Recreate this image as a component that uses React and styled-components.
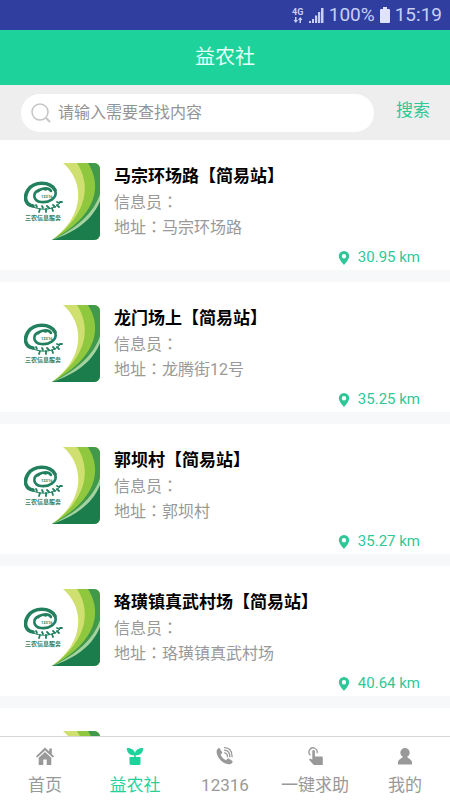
import React, { useState } from 'react';
import styled, { createGlobalStyle } from 'styled-components';

const stations = [
  { id: 1, name: '马宗环场路【简易站】', address: '马宗环场路', distance: '30.95' },
  { id: 2, name: '龙门场上【简易站】', address: '龙腾街12号', distance: '35.25' },
  { id: 3, name: '郭坝村【简易站】', address: '郭坝村', distance: '35.27' },
  { id: 4, name: '珞璜镇真武村场【简易站】', address: '珞璜镇真武村场', distance: '40.64' },
  { id: 5 },
];

const HomeIcon = () => (
  <svg width="20" height="20" viewBox="0 0 20 20" fill="currentColor">
    <path d="M10 1.500 1 10.200l1.300 1.300L10 4.400l7.700 7.100 1.300-1.300-2.200-2.100V2.500h-2.600v3z" />
    <path d="m10 6-6.300 5.700V19h4.600v-5.500h3.400V19h4.600v-7.300z" />
  </svg>
);

const PlantIcon = () => (
  <svg width="20" height="20" viewBox="0 0 20 20" fill="currentColor">
    <path d="M1.800 2C6.500 2 9 3.600 10 7c1-3.400 3.500-5 8.200-5 0 4.600-2.500 7.200-7.400 7.300v2.200H9.200V9.300C4.300 9.200 1.800 6.600 1.800 2z" />
    <path d="M4.500 11h11v6.500A1.500 1.500 0 0 1 14 19H6a1.500 1.500 0 0 1-1.500-1.500z" />
  </svg>
);

const PhoneIcon = () => (
  <svg width="20" height="20" viewBox="0 0 20 20" fill="none">
    <path
      fill="currentColor"
      d="M4.800 2.600 7 5.900c.4.700.2 1.300-.4 1.800l-1 .8c.9 2.600 2.900 4.700 5.500 5.800l1-1.200c.5-.6 1.100-.7 1.800-.3l3.200 2c.6.4.7 1 .3 1.600-1.200 1.700-3 2.300-5.200 1.700C7 16.600 3 12.500 1.800 7.200 1.300 5.100 1.800 3.500 3.300 2.300c.6-.4 1.100-.3 1.500.3z"
    />
    <path
      stroke="currentColor"
      strokeWidth="1.300"
      strokeLinecap="round"
      d="M9.500 6.800c1.800.2 3 1.500 3 4M9.500 4.200c3.200.2 5.300 2.500 5.300 6.600M9.500 1.700c4.600.1 7.600 3.400 7.600 9"
    />
  </svg>
);

const TouchIcon = () => (
  <svg width="20" height="20" viewBox="0 0 20 20" fill="none">
    <path stroke="currentColor" strokeWidth="1.300" d="M5.500 9.200A4.100 4.100 0 1 1 12 7.200" />
    <path
      fill="currentColor"
      d="M7.300 5.200a1.300 1.300 0 0 1 2.600 0v5.400h6.600c.8 0 1.300.5 1.300 1.200V19H8.800L4 13.700c.6-1.100 1.500-1.300 2.300-.6l1 .8z"
    />
  </svg>
);

const UserIcon = () => (
  <svg width="20" height="20" viewBox="0 0 20 20" fill="currentColor">
    <circle cx="10" cy="6.800" r="4.700" />
    <path d="M7.700 11h4.600c.5 1.700 4.700 2 4.700 5.500v2H3v-2c0-3.500 4.200-3.800 4.700-5.500z" />
  </svg>
);

const tabs = [
  { key: 'home', label: '首页', icon: <HomeIcon /> },
  { key: 'club', label: '益农社', icon: <PlantIcon /> },
  { key: 'hotline', label: '12316', icon: <PhoneIcon /> },
  { key: 'help', label: '一键求助', icon: <TouchIcon /> },
  { key: 'mine', label: '我的', icon: <UserIcon /> },
];

const StationLogo = ({ captioned }) => (
  <Logo viewBox="0 0 76 77" role="img" aria-label="三农信息服务">
    <path fill="#cfe070" d="M39 0C60 18 62 52 28 77h48V0z" />
    <path fill="#8fc73e" d="M53 0C66 20 66 50 28 77h48V0z" />
    <path fill="#41994c" d="M64 0C78 22 74 52 28 77h48V0z" />
    <path fill="#a5d3a0" d="M76 31C70 50 52 66 28 77h48z" />
    <path fill="#1b7d4b" d="M76 38C69 56 52 69 28 77h48z" />
    <g fill="none" stroke="#23805f" strokeLinecap="round">
      <path strokeWidth="3.600" d="M31 27C26 18 10 18 4 27c-5 8-2 15 5 16" />
      <path strokeWidth="2.600" d="M31 27c3 8-6 13-14 12-8-1-9-9-2-12 5-2 10-2 12 1" />
      <path strokeWidth="1.500" d="m14 29 4-3 4 1" />
      <path strokeWidth="1" d="M9 44c9 4 22 3 28-5" />
      <path
        strokeWidth="1.800"
        d="m13 44-1-2m4 4-1 3m4-4-1-2m4 3v3m3-4-2-2m5 2 1 3m2-4-2-2m4 0 2 2m0-4-2-1m3 0h2"
      />
    </g>
    {captioned && (
      <>
        <text x="17" y="35" fontSize="4" fontWeight="700" fill="#23805f">12316</text>
        <text x="1" y="57" fontSize="6" fontWeight="700" fill="#387e60">三农信息服务</text>
      </>
    )}
  </Logo>
);

const StationCard = ({ station }) => (
  <Card>
    <StationLogo captioned={Boolean(station.name)} />
    {station.name && (
      <CardBody>
        <StationName>{station.name}</StationName>
        <InfoLine>
          信息员<Colon>：</Colon>
        </InfoLine>
        <InfoLine>
          地址<Colon>：</Colon>
          {station.address}
        </InfoLine>
        <Distance>
          <svg width="12" height="14" viewBox="0 0 12 14">
            <path
              fill="currentColor"
              fillRule="evenodd"
              d="M6 0a5.200 5.200 0 0 0-5.200 5.300C.8 8.700 6 14 6 14s5.200-5.300 5.200-8.700A5.200 5.200 0 0 0 6 0zm0 3a2.200 2.200 0 1 1 0 4.400A2.200 2.200 0 0 1 6 3z"
            />
          </svg>
          {station.distance} km
        </Distance>
      </CardBody>
    )}
  </Card>
);

const App = () => {
  const [keyword, setKeyword] = useState('');
  const [activeTab, setActiveTab] = useState('club');

  return (
    <>
      <GlobalStyle />
      <Page>
        <StatusBar>
          <svg width="12" height="17" viewBox="0 0 12 17" fill="#c9cff5">
            <text x="0" y="8" fontSize="9" fontWeight="700">4G</text>
            <path d="M3 10h1.500v3H6l-2.200 3-2.300-3H3zM7.500 16v-3H6l2.300-3 2.200 3H9v3z" />
          </svg>
          <svg width="15" height="16" viewBox="0 0 15 16" fill="#c9cff5">
            <path d="M0 14h2v2H0zM3 12h2v4H3zM6 8.500h2.200V16H6zM9 5h2.200v11H9zM12 1h2.500v15H12z" />
          </svg>
          <StatusText>100%</StatusText>
          <svg width="10" height="16" viewBox="0 0 10 16" fill="#dfe3ff">
            <path d="M3 0h4v2h2a1 1 0 0 1 1 1v12a1 1 0 0 1-1 1H1a1 1 0 0 1-1-1V3a1 1 0 0 1 1-1h2z" />
          </svg>
          <StatusText>15:19</StatusText>
        </StatusBar>

        <Header>
          <Title>益农社</Title>
        </Header>

        <SearchBar>
          <SearchBox>
            <svg width="20" height="20" viewBox="0 0 20 20" fill="none" stroke="#c4c4c4" strokeWidth="1.500">
              <circle cx="9" cy="9" r="8" />
              <path d="m15 15 4 4" strokeWidth="2" />
            </svg>
            <SearchInput
              type="text"
              aria-label="请输入需要查找内容"
              placeholder="请输入需要查找内容"
              value={keyword}
              onChange={(e) => setKeyword(e.target.value)}
            />
          </SearchBox>
          <SearchButton type="button">搜索</SearchButton>
        </SearchBar>

        <StationList>
          {stations.map((station) => (
            <StationCard key={station.id} station={station} />
          ))}
        </StationList>

        <TabBar>
          {tabs.map((tab) => (
            <TabButton
              key={tab.key}
              type="button"
              $active={tab.key === activeTab}
              onClick={() => setActiveTab(tab.key)}
            >
              {tab.icon}
              <span>{tab.label}</span>
            </TabButton>
          ))}
        </TabBar>
      </Page>
    </>
  );
};

export default App;

const GlobalStyle = createGlobalStyle`
  * {
    box-sizing: border-box;
  }

  body {
    margin: 0;
    font-family: Roboto, 'Noto Sans CJK SC', sans-serif;
  }

  button,
  input {
    padding: 0;
    border: 0;
    background: none;
    font-family: inherit;
  }
`;

const Page = styled.div`
  display: flex;
  flex-direction: column;
  height: 100vh;
  background: #f7f8fa;
`;

const StatusBar = styled.div`
  display: flex;
  flex: none;
  align-items: center;
  justify-content: flex-end;
  gap: 5px;
  height: 30px;
  padding-right: 8px;
  background: #303f9f;
`;

const StatusText = styled.span`
  font-size: 19px;
  line-height: 30px;
  color: #c9cff5;
`;

const Header = styled.header`
  flex: none;
  height: 55px;
  background: #1dd39b;
`;

const Title = styled.h1`
  margin: 0;
  font-size: 20px;
  font-weight: 400;
  line-height: 55px;
  text-align: center;
  color: #e4fff5;
`;

const SearchBar = styled.div`
  display: flex;
  flex: none;
  align-items: center;
  gap: 22px;
  height: 55px;
  padding: 0 20px 0 21px;
  background: #eeeeee;
`;

const SearchBox = styled.label`
  display: flex;
  flex: 1;
  align-items: center;
  gap: 7px;
  height: 38px;
  padding: 0 10px;
  border-radius: 19px;
  background: #fff;
`;

const SearchInput = styled.input`
  flex: 1;
  min-width: 0;
  outline: none;
  font-size: 16px;
  color: #555;

  &::placeholder {
    color: #949494;
  }
`;

const SearchButton = styled.button`
  padding-bottom: 8px;
  font-size: 17px;
  color: #2fc797;
`;

const StationList = styled.main`
  display: flex;
  flex: 1;
  flex-direction: column;
  gap: 12px;
  min-height: 0;
  overflow: hidden;
`;

const Card = styled.article`
  display: flex;
  flex: none;
  gap: 14px;
  padding: 23px 30px 0 24px;
  background: #fff;
`;

const Logo = styled.svg`
  flex: none;
  width: 76px;
  height: 77px;
  border-radius: 0 6px 6px 0;
`;

const CardBody = styled.div`
  flex: 1;
`;

const StationName = styled.h2`
  margin: 0;
  font-size: 17px;
  font-weight: 700;
  line-height: 27px;
  color: #000;
`;

const InfoLine = styled.p`
  margin: 0;
  font-size: 16px;
  line-height: 25px;
  color: #999;
`;

/* the TC face centres the full-width colon in its box */
const Colon = styled.span`
  font-family: 'Noto Sans CJK TC', sans-serif;
  line-height: 1;
`;

const Distance = styled.div`
  display: flex;
  align-items: center;
  justify-content: flex-end;
  gap: 8px;
  padding-top: 5px;
  font-size: 15px;
  line-height: 25px;
  color: #2fc797;
`;

const TabBar = styled.nav`
  display: flex;
  flex: none;
  height: 64px;
  border-top: 1px solid #d6d6d6;
  background: #fff;
`;

const TabButton = styled.button`
  display: flex;
  flex: 1;
  flex-direction: column;
  align-items: center;
  gap: 5px;
  padding-top: 9px;
  font-size: 17px;
  line-height: 28px;
  white-space: nowrap;
  color: ${({ $active }) => ($active ? '#1dd39b' : '#999')};
`;
